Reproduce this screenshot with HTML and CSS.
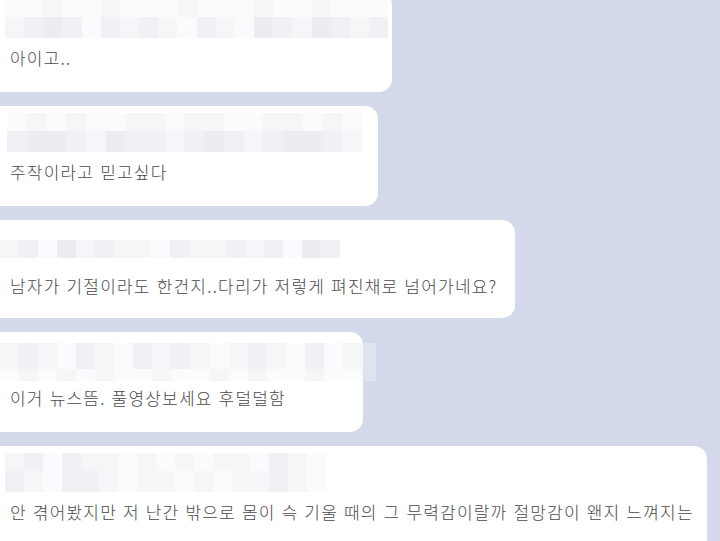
FILE: index.html
```html
<!DOCTYPE html>
<html lang="ko">
<head>
<meta charset="utf-8">
<link rel="stylesheet" href="styles.css">
</head>
<body>
<div class="chat">
  <div class="bubble b1">
    <div class="mosaic m1">
      <div class="row top"><span class="a"></span><span class="a"></span><span class="b"></span><span class="a"></span><span class="a"></span><span class="b"></span><span class="a"></span><span class="a"></span><span class="a"></span><span class="b"></span><span class="a"></span><span class="a"></span><span class="a"></span><span class="b"></span><span class="a"></span><span class="a"></span><span class="b"></span><span class="a"></span><span class="a"></span><span class="a"></span></div>
      <div class="row bot"><span class="b"></span><span class="c"></span><span class="d"></span><span class="c"></span><span class="a"></span><span class="c"></span><span class="b"></span><span class="c"></span><span class="b"></span><span class="a"></span><span class="c"></span><span class="b"></span><span class="a"></span><span class="d"></span><span class="c"></span><span class="b"></span><span class="d"></span><span class="c"></span><span class="b"></span><span class="c"></span></div>
    </div>
    <p class="msg">아이고..</p>
  </div>

  <div class="bubble b2">
    <div class="mosaic m2">
      <div class="row top"><span class="a"></span><span class="b"></span><span class="a"></span><span class="b"></span><span class="a"></span><span class="a"></span><span class="b"></span><span class="b"></span><span class="a"></span><span class="b"></span><span class="b"></span><span class="a"></span><span class="a"></span><span class="b"></span><span class="b"></span><span class="a"></span><span class="b"></span><span class="a"></span></div>
      <div class="row bot"><span class="c"></span><span class="d"></span><span class="d"></span><span class="c"></span><span class="b"></span><span class="d"></span><span class="c"></span><span class="c"></span><span class="b"></span><span class="c"></span><span class="d"></span><span class="c"></span><span class="b"></span><span class="c"></span><span class="d"></span><span class="d"></span><span class="c"></span><span class="b"></span></div>
    </div>
    <p class="msg">주작이라고 믿고싶다</p>
  </div>

  <div class="bubble b3">
    <div class="mosaic m3">
      <div class="row bot"><span class="b"></span><span class="c"></span><span class="a"></span><span class="d"></span><span class="b"></span><span class="c"></span><span class="b"></span><span class="b"></span><span class="a"></span><span class="c"></span><span class="b"></span><span class="b"></span><span class="c"></span><span class="b"></span><span class="c"></span><span class="a"></span><span class="d"></span><span class="c"></span></div>
    </div>
    <p class="msg">남자가 기절이라도 한건지..다리가 저렇게 펴진채로 넘어가네요?</p>
  </div>

  <div class="bubble b4">
    <div class="mosaic m4">
      <div class="row top"><span class="b"></span><span class="c"></span><span class="b"></span><span class="a"></span><span class="c"></span><span class="b"></span><span class="a"></span><span class="c"></span><span class="b"></span><span class="c"></span><span class="b"></span><span class="a"></span><span class="b"></span><span class="c"></span><span class="b"></span><span class="a"></span><span class="c"></span><span class="a"></span><span class="b"></span><span class="x"></span></div>
      <div class="row bot"><span class="a"></span><span class="b"></span><span class="a"></span><span class="b"></span><span class="a"></span><span class="b"></span><span class="a"></span><span class="a"></span><span class="b"></span><span class="a"></span><span class="a"></span><span class="b"></span><span class="a"></span><span class="b"></span><span class="a"></span><span class="a"></span><span class="b"></span><span class="a"></span><span class="a"></span><span class="x"></span></div>
    </div>
    <p class="msg">이거 뉴스뜸. 풀영상보세요 후덜덜함</p>
  </div>

  <div class="bubble b5">
    <div class="mosaic m5">
      <div class="row top"><span class="b"></span><span class="c"></span><span class="a"></span><span class="c"></span><span class="b"></span><span class="b"></span><span class="a"></span><span class="b"></span><span class="a"></span><span class="b"></span><span class="a"></span><span class="b"></span><span class="b"></span><span class="a"></span><span class="c"></span><span class="b"></span><span class="a"></span></div>
      <div class="row bot"><span class="c"></span><span class="b"></span><span class="a"></span><span class="c"></span><span class="c"></span><span class="b"></span><span class="a"></span><span class="b"></span><span class="b"></span><span class="a"></span><span class="b"></span><span class="a"></span><span class="b"></span><span class="b"></span><span class="c"></span><span class="b"></span><span class="a"></span></div>
    </div>
    <p class="msg">안 겪어봤지만 저 난간 밖으로 몸이 슥 기울 때의 그 무력감이랄까 절망감이 왠지 느껴지는</p>
  </div>
</div>
</body>
</html>
```

FILE: styles.css
```css
html, body {
  margin: 0;
  padding: 0;
}

body {
  background: #d3d8ea;
  width: 720px;
  height: 541px;
  overflow: hidden;
  font-family: "Noto Sans CJK KR", "Noto Sans", sans-serif;
}

.chat {
  display: flex;
  flex-direction: column;
  align-items: flex-start;
  gap: 14px;
  margin-top: -8px;
}

.bubble {
  box-sizing: border-box;
  margin-left: -14px;
  padding: 7px 0 14px 0;
  background: #ffffff;
  border-radius: 13px;
  height: 100px;
}

.b1 { width: 406px; }
.b2 { width: 392px; }
.b3 { width: 529px; height: 98px; }
.b4 { width: 377px; }
.b5 { width: 721px; height: 120px; }

.mosaic {
  height: 39px;
  display: flex;
  flex-direction: column;
}

.m1 { margin-left: 19px; width: 383px; }
.m2 { margin-left: 21px; width: 355px; }
.m3 { margin-left: 14px; width: 340px; justify-content: flex-end; padding-bottom: 8px; box-sizing: border-box; }
.m4 { margin-left: 14px; width: 376px; margin-top: 4px; height: 38px; margin-bottom: -3px; }
.m5 { margin-left: 19px; width: 321px; }

.row {
  display: flex;
}

.row.top { height: 18px; }
.row.bot { height: 21px; }
.m3 .row.bot { height: 18px; }
.m4 .row.top { height: 26px; }
.m4 .row.bot { height: 12px; }

.row span {
  flex: 1;
}

.row .a { background: #fafbfc; }
.row .b { background: #f5f6f8; }
.row .c { background: #f0f1f4; }
.row .d { background: #ebedf1; }
.row .x { background: rgba(236, 238, 246, 0.5); flex: 0 0 14px; }

.msg {
  margin: 0;
  padding-left: 24px;
  height: 40px;
  line-height: 40px;
  font-size: 17px;
  font-weight: 300;
  letter-spacing: 1.2px;
  color: #4a4a4a;
  white-space: nowrap;
}
```
